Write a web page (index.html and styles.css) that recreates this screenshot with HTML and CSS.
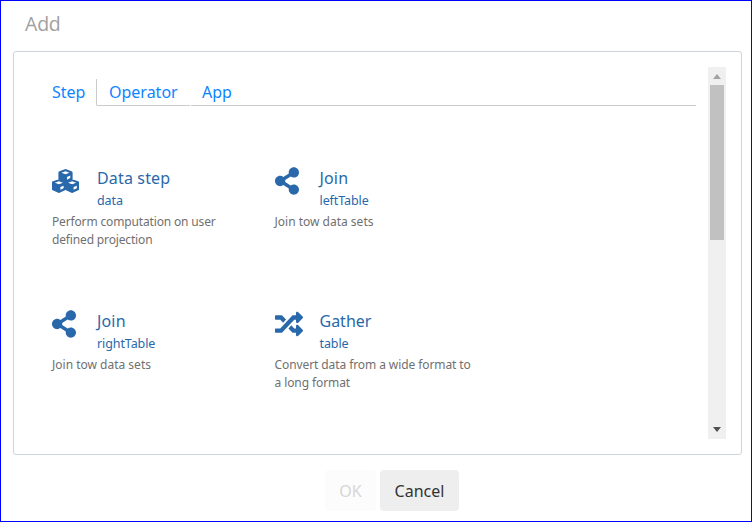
FILE: index.html
```html
<!DOCTYPE html>
<html lang="en">
<head>
<meta charset="utf-8">
<title>Add</title>
<link rel="stylesheet" href="styles.css">
</head>
<body>
<svg class="defs" width="0" height="0">
  <symbol id="share" viewBox="0 0 448 512"><path d="M352 320c-22.608 0-43.387 7.819-59.79 20.895l-102.486-64.054a96.551 96.551 0 0 0 0-41.683l102.486-64.054C308.613 184.181 329.392 192 352 192c53.019 0 96-42.981 96-96S405.019 0 352 0s-96 42.981-96 96c0 7.158.79 14.13 2.276 20.841L155.79 180.895C139.387 167.819 118.608 160 96 160c-53.019 0-96 42.981-96 96s42.981 96 96 96c22.608 0 43.387-7.819 59.79-20.895l102.486 64.054A96.301 96.301 0 0 0 256 416c0 53.019 42.981 96 96 96s96-42.981 96-96-42.981-96-96-96z"/></symbol>
  <symbol id="random" viewBox="0 0 512 512"><path d="M504.971 359.029c9.373 9.373 9.373 24.569 0 33.941l-80 79.984c-15.01 15.01-40.971 4.49-40.971-16.971V416h-58.785a12.004 12.004 0 0 1-8.773-3.812l-70.556-75.596 53.333-57.143L352 336h32v-39.981c0-21.438 25.943-31.998 40.971-16.971l80 79.981zM12 176h84l52.781 56.551 53.333-57.143-70.556-75.596A11.999 11.999 0 0 0 122.785 96H12c-6.627 0-12 5.373-12 12v56c0 6.627 5.373 12 12 12zm372 0v39.984c0 21.46 25.961 31.98 40.971 16.971l80-79.984c9.373-9.373 9.373-24.569 0-33.941l-80-79.981C409.943 24.021 384 34.582 384 56.019V96h-58.785a12.004 12.004 0 0 0-8.773 3.812L96 336H12c-6.627 0-12 5.373-12 12v56c0 6.627 5.373 12 12 12h110.785c3.326 0 6.503-1.381 8.773-3.812L352 176h32z"/></symbol>
  <symbol id="cube" viewBox="0 0 15 14">
    <path d="M6.8.2q.7-.3 1.4 0l5.400 2q1.100.4 1.100 1.300v6.500q0 .9-1 1.300l-5.500 2.500q-.7.3-1.400 0l-5.500-2.500q-1-.4-1-1.300V3.500q0-.9 1.100-1.300z"/>
    <path class="face" d="M7.500 2.200 11.600 3.700 7.500 5.200 3.400 3.700zM9 8 12.300 6.700v2.500L9 10.800z"/>
  </symbol>
  <symbol id="cubes" viewBox="0 0 27 24">
    <use href="#cube" x="5.700" y="0" width="15.600" height="13.800"/>
    <use href="#cube" x="-.7" y="10.200" width="15.200" height="13.800"/>
    <use href="#cube" x="12.500" y="10.200" width="15.200" height="13.800"/>
  </symbol>
</svg>
<div class="dialog">
  <h1 class="title">Add</h1>
  <div class="panel">
    <div class="content">
      <nav class="tabs">
        <a class="tab active">Step</a>
        <a class="tab operator">Operator</a>
        <a class="tab app">App</a>
      </nav>
      <div class="cards">
        <article class="card">
          <div class="head"><div class="icon"><svg class="i-cubes"><use href="#cubes"/></svg></div>
            <div><h2 class="wide">Data step</h2><h3>data</h3></div></div>
          <p class="tight">Perform computation on user<br>defined projection</p>
        </article>
        <article class="card">
          <div class="head"><div class="icon"><svg class="i-share"><use href="#share"/></svg></div>
            <div><h2 class="wide">Join</h2><h3>leftTable</h3></div></div>
          <p>Join tow data sets</p>
        </article>
        <article class="card">
          <div class="head"><div class="icon"><svg class="i-share"><use href="#share"/></svg></div>
            <div><h2 class="wide">Join</h2><h3>rightTable</h3></div></div>
          <p>Join tow data sets</p>
        </article>
        <article class="card">
          <div class="head"><div class="icon"><svg class="i-random"><use href="#random"/></svg></div>
            <div><h2>Gather</h2><h3>table</h3></div></div>
          <p class="snug">Convert data from a wide format to<br>a long format</p>
        </article>
      </div>
    </div>
    <div class="scrollbar">
      <svg class="arrow up" viewBox="0 0 8 5"><path d="M4 0 8 5H0z"/></svg>
      <div class="thumb"></div>
      <svg class="arrow down" viewBox="0 0 8 5"><path d="M0 0H8L4 5z"/></svg>
    </div>
  </div>
  <div class="actions">
    <button class="btn ok" disabled>OK</button>
    <button class="btn cancel">Cancel</button>
  </div>
</div>
</body>
</html>
```
FILE: styles.css
```css
* { box-sizing: border-box; }
body { margin: 0; background: #fff; font-family: "Noto Sans", "Open Sans", sans-serif; }
.defs { position: absolute; }
h1, h2, h3, p { margin: 0; font-weight: 400; white-space: nowrap; }
.dialog { width: 752px; height: 522px; border: 1px solid #00f; padding: 0 9px 0 12px; display: flex; flex-direction: column; }
.title { height: 50px; padding: 9px 0 0 12px; font-family: "Open Sans", sans-serif; font-size: 19.500px; line-height: 27px; color: #a0a0a0; letter-spacing: -.2px; }
.panel { height: 404px; width: 729px; border: 1px solid #ced4da; border-radius: 3px; padding: 15px; display: flex; justify-content: space-between; }
.content { width: 667px; padding: 12px 0 0 23px; }
.tabs { display: flex; width: 644px; height: 27px; }
.tab { display: block; border-bottom: 1px solid #ccc; color: #0d84ff; font-size: 16px; line-height: 26px; padding-left: 12px; white-space: nowrap; }
.tab.active { width: 45px; padding-left: 0; border-bottom-color: transparent; border-right: 1px solid #ccc; }
.tab.operator { width: 93px; }
.tab.app { flex: 1; margin-left: 1px; padding-left: 11px; }
.cards { display: grid; grid-template-columns: 222.500px 222.500px; grid-auto-rows: 143px; padding-top: 59px; }
.head { display: flex; color: #2968aa; }
.icon { width: 45px; padding-top: 2px; }
.icon svg { display: block; fill: #2968aa; }
.icon .i-cubes { width: 27px; height: 24px; margin: 2px 0 0; }
.i-share { width: 24px; height: 28px; }
.i-random { width: 28px; height: 28px; }
.icon .face { fill: #fff; }
.face { fill: #fff; }
h2 { font-size: 16px; line-height: 26px; }
.wide { letter-spacing: .15px; }
h3 { font-size: 12.500px; line-height: 20px; letter-spacing: -.1px; }
p { font-size: 12px; line-height: 18px; color: #707070; padding-top: 2px; }
.tight { letter-spacing: -.15px; }
.snug { letter-spacing: -.09px; }
.scrollbar { width: 18px; height: 372px; background: #f0f0f0; display: flex; flex-direction: column; align-items: center; }
.arrow { width: 8px; height: 5px; }
.up { fill: #a3a3a3; margin: 7px 0 6px; }
.down { fill: #505050; margin: auto 0 7px; }
.thumb { width: 14px; height: 155px; background: #c1c1c1; }
.actions { display: flex; gap: 4px; padding: 15px 0 0 312px; }
.btn { height: 41px; border: 0; border-radius: 4px; padding: 2px 0 0; font-family: "Noto Sans", sans-serif; font-size: 16px; line-height: 39px; background: #eee; color: #333; }
.ok { width: 51px; background: #fcfcfc; color: #d6d6d6; }
.cancel { width: 79px; }
```
